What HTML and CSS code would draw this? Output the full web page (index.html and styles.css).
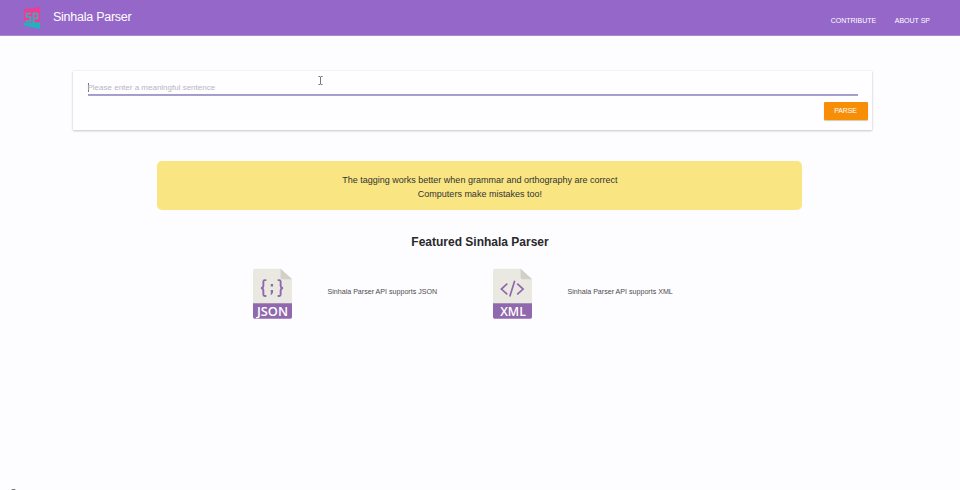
FILE: index.html
```html
<!DOCTYPE html>
<html lang="en">
<head>
<meta charset="utf-8">
<title>Sinhala Parser</title>
<link rel="stylesheet" href="styles.css">
</head>
<body>
<header class="navbar">
  <a class="brand">
    <svg class="logo" width="18" height="24" viewBox="0 0 18 24">
      <path d="M1 2.500 17 0V15L1 15.500Z" fill="#ef3c92"/>
      <path d="M1 15.500H17V22L1 18.500Z" fill="#20b2bd"/>
      <path d="M8 6.500H3.500V10H7.500V14H2M10.500 16.500V6.500H14.500V11.500H10.500" fill="none" stroke="#35b0c4" stroke-width="1.700"/>
    </svg>
    <span class="brand-name">Sinhala Parser</span>
  </a>
  <nav class="links"><a class="contribute">CONTRIBUTE</a><a class="about">ABOUT SP</a></nav>
</header>
<main>
  <form class="card">
    <div class="field"><span class="caret"></span><span class="placeholder">Please enter a meaningful sentence</span></div>
    <button class="parse" type="button"><span>PARSE</span></button>
  </form>
  <section class="notice">
    <p class="line-one"><span>The tagging works better when grammar and orthography are correct</span></p>
    <p class="line-two"><span>Computers make mistakes too!</span></p>
  </section>
  <h2><span>Featured Sinhala Parser</span></h2>
  <section class="features">
    <div class="feature">
      <svg width="39" height="51" viewBox="0 0 39.5 51">
        <path d="M2 .5H28L39.500 11V36H0V2.500Q0 .5 2 .5Z" fill="#e9e8e1"/>
        <path d="M28 .5 39.500 11H30Q28 11 28 9Z" fill="#d2cfc8"/>
        <path d="M0 35.500H39.500V49Q39.500 51 38 51H1.500Q0 51 0 49Z" fill="#9068ad"/>
        <path d="M13.500 12H12Q10.500 12 10.500 13.500V17.500Q10.500 20 8 20Q10.500 20 10.500 22.500V26.500Q10.500 28 12 28H13.500M25 12H26.500Q28 12 28 13.500V17.500Q28 20 30.500 20Q28 20 28 22.500V26.500Q28 28 26.500 28H25" fill="none" stroke="#9068ad" stroke-width="1.900"/>
        <path d="M18 16H20.300V18.500H18ZM18 22H20.300V24.500L18.800 26.800H17.700L18.300 24.500H18Z" fill="#9068ad"/>
        <text class="file-label" x="19.700" y="48" textLength="31.500" lengthAdjust="spacingAndGlyphs">JSON</text>
      </svg>
      <p><span class="json-copy">Sinhala Parser API supports JSON</span></p>
    </div>
    <div class="feature">
      <svg width="39" height="51" viewBox="0 0 39.5 51">
        <path d="M2 .5H28L39.500 11V36H0V2.500Q0 .5 2 .5Z" fill="#e9e8e1"/>
        <path d="M28 .5 39.500 11H30Q28 11 28 9Z" fill="#d2cfc8"/>
        <path d="M0 35.500H39.500V49Q39.500 51 38 51H1.500Q0 51 0 49Z" fill="#9068ad"/>
        <path d="M14.500 15.500 8.500 21 14.500 26.500M24.500 15.500 30.500 21 24.500 26.500M22 12.500 17 28.500" fill="none" stroke="#9068ad" stroke-width="1.700"/>
        <text class="file-label" x="20.300" y="48" textLength="26" lengthAdjust="spacingAndGlyphs">XML</text>
      </svg>
      <p><span class="xml-copy">Sinhala Parser API supports XML</span></p>
    </div>
  </section>
</main>
<span class="status-dot"></span>
<svg class="pointer" width="5" height="9" viewBox="0 0 5 9"><path d="M.5 .5H2L2.500 1 3 .5H4.500M2.500 1V8M.5 8.500H2L2.500 8 3 8.500H4.500" fill="none" stroke="#77747c"/></svg>
</body>
</html>
```

FILE: styles.css
```css
* { box-sizing: border-box; }
body { margin: 0; height: 490px; overflow: hidden; position: relative; background: #fdfcfe; color: #333; font-family: "Liberation Sans", Arial, sans-serif; }
p, h2 { margin: 0; }
span { white-space: nowrap; }
.navbar { height: 36px; display: flex; justify-content: space-between; background: #9467c9; color: #fff; border-bottom: 1px solid #a78bc9; }
.brand { display: flex; padding-left: 23px; }
.logo { margin-top: 7px; }
.brand-name { margin-left: 12px; font-size: 12.5px; letter-spacing: -.25px; line-height: 34px; }
.links { display: flex; padding-right: 30px; gap: 18.5px; font-size: 7px; line-height: 41px; }
main { padding-top: 35px; }
.card { width: 799px; height: 59px; margin-left: 73px; padding: 8px 4.5px 0 14.5px; background: #fefdff; box-shadow: 0 1px 2px #c9c7cc, 0 0 2px #e9e7eb; display: flex; flex-direction: column; }
.field { width: 770px; height: 16px; padding-top: 2px; border-bottom: 1px solid #a49bcb; box-shadow: 0 1px 0 #aaa0ce; display: flex; align-items: center; font-size: 8px; color: #b9b7bb; }
.caret { width: 1px; height: 9px; margin-right: -1px; background: #77747c; }
.parse { align-self: flex-end; width: 44px; height: 18px; margin-top: 7px; padding: 0; border: 0; border-radius: 1px; background: #f78e08; color: #fff; font: 7px/18px "Liberation Sans", Arial, sans-serif; letter-spacing: -.1px; box-shadow: 0 1px 1px #d6cba9; }
.notice { width: 645px; height: 49px; margin: 31px auto 0 157.4px; padding-top: 12px; border-radius: 5px; background: #f9e582; text-align: center; font-size: 9px; line-height: 14.5px; }
.line-two { margin-top: -.5px; }
h2 { margin-top: 23px; text-align: center; font-size: 12px; line-height: 18px; color: #29282c; }
.features { display: grid; grid-template-columns: 240px 240px; margin: 17px 0 0 253px; }
.feature { display: flex; }
.feature p { margin-left: 35.5px; font-size: 7.1px; line-height: 49px; color: #4d4b50; }
.file-label { font-family: "Open Sans", sans-serif; font-weight: 600; font-size: 13px; fill: #fff; text-anchor: middle; }
.status-dot { position: absolute; left: 11px; top: 489px; width: 5px; height: 5px; border-radius: 2px; background: #77747c; }
.pointer { position: absolute; left: 318px; top: 76px; }
```
